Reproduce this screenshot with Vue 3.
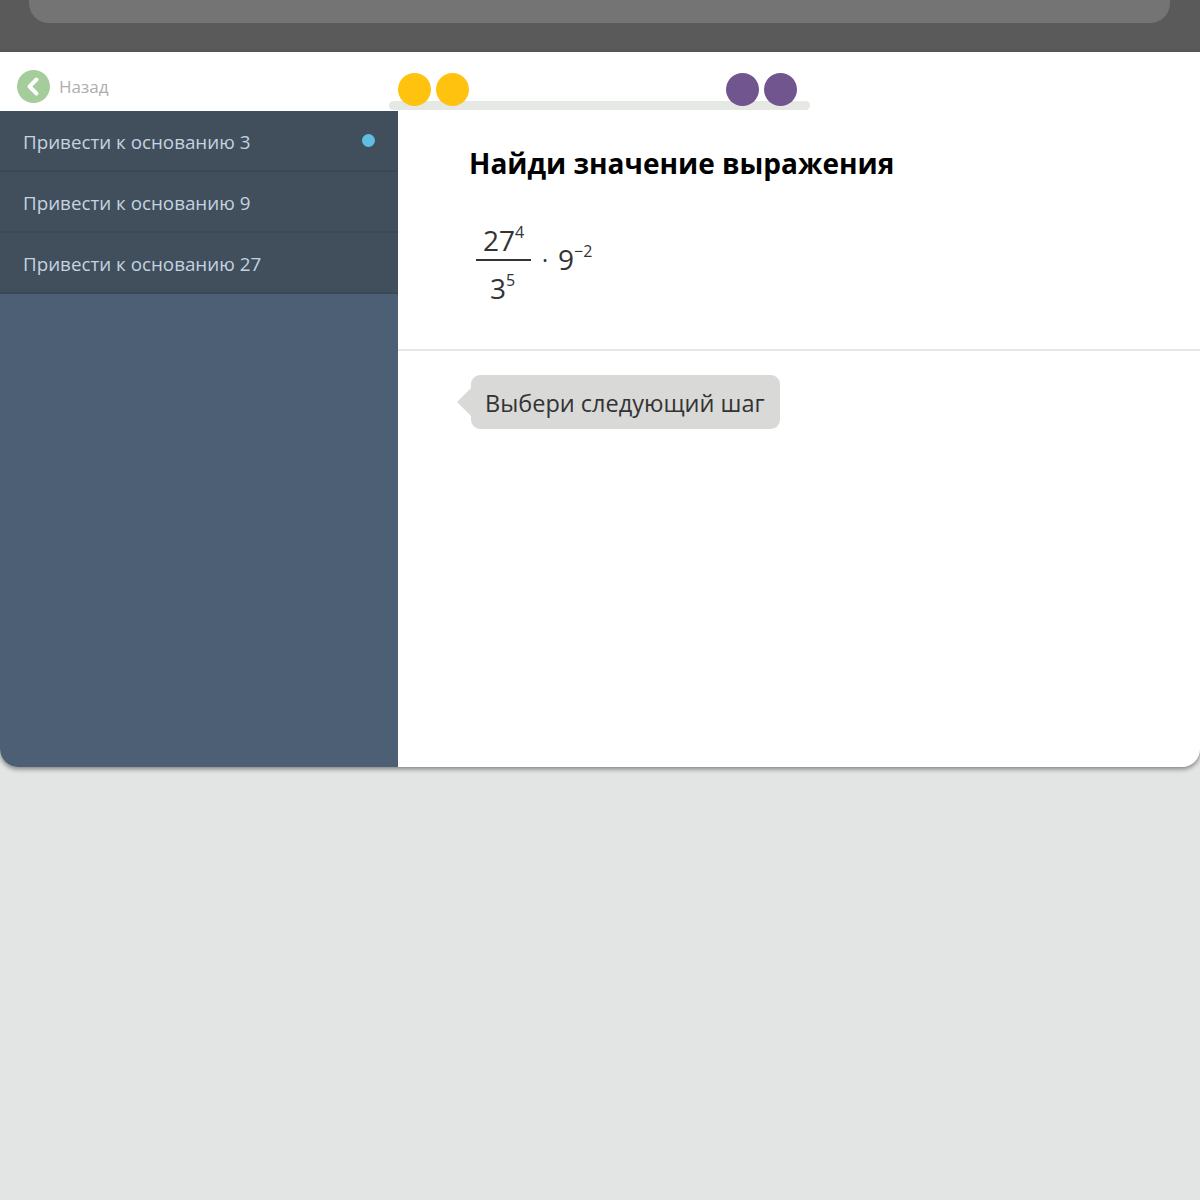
<template>
  <div class="page">
    <!-- top strip -->
    <div class="top">
      <div class="top__bar" />
    </div>

    <div class="card">
      <!-- header with back link and score -->
      <header class="head">
        <div class="back">
          <svg class="back__icon" viewBox="0 0 33 33" aria-hidden="true">
            <circle cx="16.5" cy="16.5" r="16.5" fill="#a5cc9b" />
            <path d="M19.5 9.5l-7 7 7 7" fill="none" stroke="#fff" stroke-width="4" stroke-linecap="round" stroke-linejoin="round" />
          </svg>
          <span class="back__label">Назад</span>
        </div>
        <div class="score">
          <div class="score__track" />
          <div class="score__group">
            <span v-for="n in 2" :key="'y' + n" class="dot dot--yellow" />
          </div>
          <div class="score__group">
            <span v-for="n in 2" :key="'p' + n" class="dot dot--purple" />
          </div>
        </div>
      </header>

      <div class="body">
        <nav class="side">
          <div v-for="(item, i) in items" :key="item" class="side__row">
            <span>{{ item }}</span>
            <span v-if="i === 0" class="side__mark" />
          </div>
        </nav>

        <main class="main">
          <section class="task">
            <h1 class="task__title">Найди значение выражения</h1>
            <div class="expr">
              <div class="frac">
                <div class="frac__top">27<sup>4</sup></div>
                <div class="frac__bottom">3<sup>5</sup></div>
              </div>
              <span class="expr__dot">·</span>
              <span class="expr__num">9<sup>−2</sup></span>
            </div>
          </section>
          <section class="hint">
            <div class="bubble">Выбери следующий шаг</div>
          </section>
        </main>
      </div>
    </div>
  </div>
</template>

<script setup>
const items = [
  'Привести к основанию 3',
  'Привести к основанию 9',
  'Привести к основанию 27',
]
</script>

<style>
html, body {
  margin: 0;
  background: #e3e5e4;
}
</style>

<style scoped>
.page {
  height: 1200px;
  background: #e3e5e4;
  font-family: "Open Sans", "Noto Sans", sans-serif;
  overflow: hidden;
}

/* ── Top strip ── */
.top {
  height: 52px;
  padding: 0 30px 0 29px;
  box-sizing: border-box;
  background: #5a5a5a;
}
.top__bar {
  height: 23px;
  background: #747474;
  border-radius: 0 0 20px 20px;
}

/* ── Card ── */
.card {
  height: 715px;
  background: #fff;
  border-radius: 0 0 18px 18px;
  box-shadow: 0 2px 5px rgba(0, 0, 0, .45);
  overflow: hidden;
  display: flex;
  flex-direction: column;
}

/* ── Header ── */
.head {
  height: 59px;
  flex-shrink: 0;
  position: relative;
}
.back {
  position: absolute;
  left: 17px;
  top: 18px;
  display: flex;
  align-items: center;
  gap: 9px;
}
.back__icon {
  width: 33px;
  height: 33px;
  display: block;
}
.back__label {
  font-size: 17px;
  color: #aeaeae;
}
.score {
  position: absolute;
  left: 389px;
  top: 21px;
  width: 421px;
  height: 37px;
  padding: 0 13px 0 9px;
  box-sizing: border-box;
  display: flex;
  justify-content: space-between;
}
.score__track {
  position: absolute;
  left: 0;
  right: 0;
  top: 28px;
  height: 9px;
  background: #e6e8e3;
  border-radius: 5px;
}
.score__group {
  position: relative;
  display: flex;
  gap: 5px;
}
.dot {
  width: 33px;
  height: 33px;
  border-radius: 50%;
}
.dot--yellow { background: #ffc20e; }
.dot--purple { background: #71558f; }

/* ── Layout ── */
.body {
  flex: 1;
  display: flex;
  min-height: 0;
}

/* ── Sidebar ── */
.side {
  width: 398px;
  flex-shrink: 0;
  background: #4d5f74;
}
.side__row {
  height: 57px;
  padding: 2px 23px 0;
  background: #414e5c;
  border-bottom: 2px solid #3c4855;
  display: flex;
  align-items: center;
  justify-content: space-between;
  font-size: 18.8px;
  color: #c4d3e0;
}
.side__mark {
  width: 13px;
  height: 13px;
  border-radius: 50%;
  background: #62bde3;
  margin-top: -3px;
}

/* ── Main ── */
.main {
  flex: 1;
  min-width: 0;
}
.task {
  height: 240px;
  padding: 36px 0 0 71px;
  box-sizing: border-box;
  border-bottom: 2px solid #e6e6e6;
}
.task__title {
  margin: 0;
  font-size: 28px;
  line-height: 32px;
  font-weight: 700;
  color: #000;
}
.expr {
  margin: 34px 0 0 7px;
  display: flex;
  align-items: center;
  font-size: 28px;
  color: #333;
}
.frac {
  width: 55px;
  text-align: center;
}
.frac__top {
  line-height: 37px;
  border-bottom: 2px solid #333;
  padding-top: 9px;
}
.frac__bottom {
  line-height: 40px;
  padding-top: 7px;
  padding-right: 2px;
}
sup {
  font-size: 16px;
  line-height: 0;
  vertical-align: 13px;
}
.expr__dot {
  margin: 0 10px 2px 11px;
  font-size: 23px;
}
.expr__num {
  margin-bottom: 4px;
}
.hint {
  padding: 24px 0 0 73px;
}
.bubble {
  position: relative;
  display: inline-block;
  padding: 0 15px 0 14px;
  height: 54px;
  line-height: 56px;
  font-size: 23.5px;
  color: #333;
  background: #d9d9d8;
  border-radius: 9px;
}
.bubble::before {
  content: "";
  position: absolute;
  left: -14px;
  top: 13px;
  border-style: solid;
  border-width: 14px 14px 14px 0;
  border-color: transparent #d9d9d8 transparent transparent;
}
</style>
